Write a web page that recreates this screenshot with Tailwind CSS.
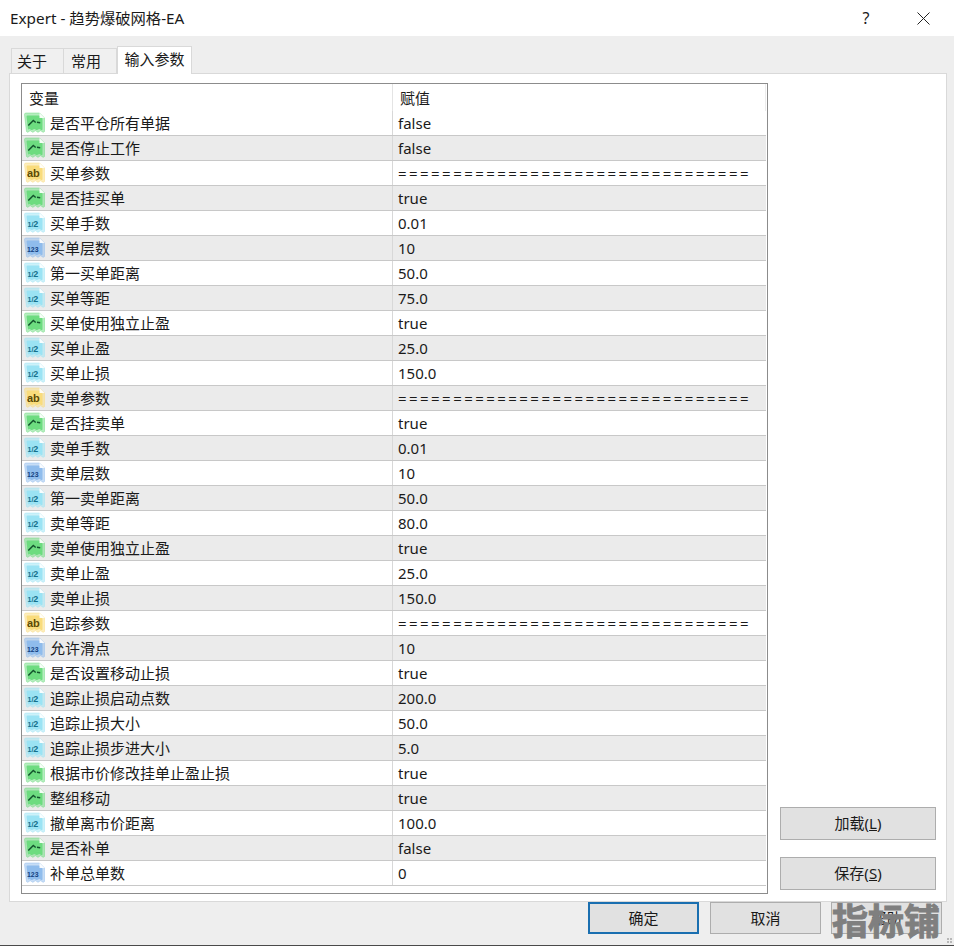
<!DOCTYPE html>
<html lang="zh-CN">
<head>
    <meta charset="UTF-8">
    <title>Expert - 趋势爆破网格-EA</title>
    <script src="https://cdn.jsdelivr.net/npm/@tailwindcss/browser@4"></script>
</head>
<body class="bg-[#eeeeee] font-['Noto_Sans','Noto_Sans_CJK_SC',sans-serif] text-[15px] text-[#1a1a1a]">
    <svg class="hidden">
        <symbol id="sheet" viewBox="0 0 22 22">
            <path d="M.5 2.500q0-1.500 1.500-1.500h13.500l5 5v13.500q-1.300 1.600-2.600 0t-2.600 0-2.600 0-2.600 0-2.600 0-2.600 0-2.400 0z" fill="currentColor" fill-opacity=".5" stroke="currentColor" stroke-opacity=".6" stroke-width=".8"/>
            <path d="M2.500 4.500q0-1 1-1h11.500l3.500 3v11q-1 1-2 0t-2.500 0-2.500 0-2.500 0-2.500 0-2.500 0z" fill="currentColor"/>
            <path d="M15.500 1v5h5z" fill="#fff" fill-opacity=".9"/>
        </symbol>
    </svg>

    <div class="w-[954px] h-[946px] flex flex-col border-b border-[#4a4a4a] overflow-hidden">
        <!-- title bar -->
        <div class="h-[36px] bg-white flex items-center pl-[10px] shrink-0">
            <span class="text-[15.300px] flex-1">Expert - 趋势爆破网格-EA</span>
            <span class="text-[16px] w-[20px] text-center mr-[41px]">?</span>
            <svg class="w-[13px] h-[13px] mr-[24px]" viewBox="0 0 13 13"><path d="M.5.5l12 12M12.500.5l-12 12" stroke="#222" fill="none"/></svg>
        </div>

        <div class="relative flex-1 flex flex-col">
            <!-- tabs -->
            <div class="h-[37px] shrink-0 flex items-end pl-[11px] pt-[9px]">
                <div class="w-[53px] h-[25px] bg-[#f0f0f0] border border-b-0 border-[#d9d9d9] flex items-center pl-[5px]">关于</div>
                <div class="w-[53px] h-[25px] bg-[#f0f0f0] border border-l-0 border-b-0 border-[#d9d9d9] flex items-center pl-[7px]">常用</div>
                <div class="relative z-10 -mb-px w-[75px] h-[28px] bg-white border border-b-0 border-[#d9d9d9] flex items-center justify-center pb-[2px]">输入参数</div>
            </div>

            <!-- panel -->
            <div class="ml-[9px] w-[938px] h-[829px] bg-white border border-[#d9d9d9] flex pl-[11px] pt-[9px] shrink-0">
                <div class="w-[747px] h-[811px] border border-[#8c8c8c] shrink-0 pr-px">
                    <div class="h-[27px] flex items-center">
                        <div class="w-[371px] pl-[7px] pt-[2px] border-r border-[#e4e4e4] h-full flex items-center">变量</div>
                        <div class="flex-1 pl-[7px] pt-[2px] h-full flex items-center border-r border-[#ececec]">赋值</div>
                    </div>
                    <div id="rows"></div>
                </div>
                <div class="ml-[12px] w-[156px] pt-[724px] flex flex-col gap-[17px]">
                    <button class="h-[33px] bg-[#e1e1e1] border border-[#adadad]">加载(<span class="underline">L</span>)</button>
                    <button class="h-[33px] bg-[#e1e1e1] border border-[#adadad]">保存(<span class="underline">S</span>)</button>
                </div>
            </div>

            <!-- bottom buttons -->
            <div class="flex justify-end pr-[12px]">
                <button class="w-[111px] h-[32px] bg-[#e1e1e1] border-2 border-[#1a6fb0]">确定</button>
                <button class="w-[111px] h-[32px] ml-[11px] bg-[#e1e1e1] border border-[#adadad]">取消</button>
                <button class="w-[111px] h-[32px] ml-[10px] bg-[#e1e1e1] border border-[#adadad]">帮助</button>
            </div>

            <!-- watermark -->
            <div class="absolute right-[13px] top-[860px] w-[110px] text-center text-[36px] leading-[46px] font-bold text-[#7f7f7f] [-webkit-text-stroke:1px_#7f7f7f] font-['Noto_Sans_CJK_SC',sans-serif] whitespace-nowrap">指标铺</div>
            <div class="absolute right-[2px] bottom-[2px] grid grid-cols-2 gap-px">
                <i class="w-[2px] h-[2px] bg-[#b8b8b8]"></i><i class="w-[2px] h-[2px] bg-[#b8b8b8]"></i>
                <i class="w-[2px] h-[2px] bg-[#b8b8b8]"></i><i class="w-[2px] h-[2px] bg-[#b8b8b8]"></i>
            </div>
        </div>
    </div>

    <script>
        const sep = '================================'
        const params = [
            ['b', '是否平仓所有单据', 'false'], ['b', '是否停止工作', 'false'],
            ['s', '买单参数', sep], ['b', '是否挂买单', 'true'], ['d', '买单手数', '0.01'],
            ['i', '买单层数', '10'], ['d', '第一买单距离', '50.0'], ['d', '买单等距', '75.0'],
            ['b', '买单使用独立止盈', 'true'], ['d', '买单止盈', '25.0'], ['d', '买单止损', '150.0'],
            ['s', '卖单参数', sep], ['b', '是否挂卖单', 'true'], ['d', '卖单手数', '0.01'],
            ['i', '卖单层数', '10'], ['d', '第一卖单距离', '50.0'], ['d', '卖单等距', '80.0'],
            ['b', '卖单使用独立止盈', 'true'], ['d', '卖单止盈', '25.0'], ['d', '卖单止损', '150.0'],
            ['s', '追踪参数', sep], ['i', '允许滑点', '10'], ['b', '是否设置移动止损', 'true'],
            ['d', '追踪止损启动点数', '200.0'], ['d', '追踪止损大小', '50.0'], ['d', '追踪止损步进大小', '5.0'],
            ['b', '根据市价修改挂单止盈止损', 'true'], ['b', '整组移动', 'true'], ['d', '撤单离市价距离', '100.0'],
            ['b', '是否补单', 'false'], ['i', '补单总单数', '0'],
        ]

        function icon(type) {
            const colors = { b: 'text-[#6ddc80]', s: 'text-[#f9dc7c]', d: 'text-[#9be3f4]', i: 'text-[#8fbcec]' }
            const marks = {
                b: '<path d="M4.300 13.500l5-5 2.400 2M13 10.300l3.200.4" stroke="#14532d" stroke-width="1.500" fill="none"/>',
                s: '<text x="3" y="15" font-size="11" font-weight="700" fill="#5c4a05" font-family="Liberation Sans">ab</text>',
                d: '<text x="3.500" y="14.500" font-weight="700" fill="#17708c" font-family="Liberation Sans"><tspan font-size="7">1/</tspan><tspan font-size="9">2</tspan></text>',
                i: '<text x="3" y="15" font-size="7.500" font-weight="700" fill="#123f80" font-family="Liberation Sans" textLength="11.500" lengthAdjust="spacingAndGlyphs">123</text>',
            }
            return `<svg class="w-[22px] h-[22px] shrink-0 ${colors[type]}" viewBox="0 0 22 22"><use href="#sheet"/>${marks[type]}</svg>`
        }

        document.getElementById('rows').innerHTML = params.map(([type, name, value], i) => `
            <div class="h-[25px] flex border-b border-[#c8c8c8] ${i % 2 ? 'bg-[#ebebeb]' : 'bg-white'}">
                <div class="w-[371px] pl-[2px] gap-[4px] flex items-center border-r border-[#d8d8d8]">${icon(type)}<span>${name}</span></div>
                <div class="flex-1 pl-[5px] flex items-center whitespace-nowrap ${type === 's' ? 'tracking-[2.450px]' : ''}">${value}</div>
            </div>`).join('')
    </script>
</body>
</html>
